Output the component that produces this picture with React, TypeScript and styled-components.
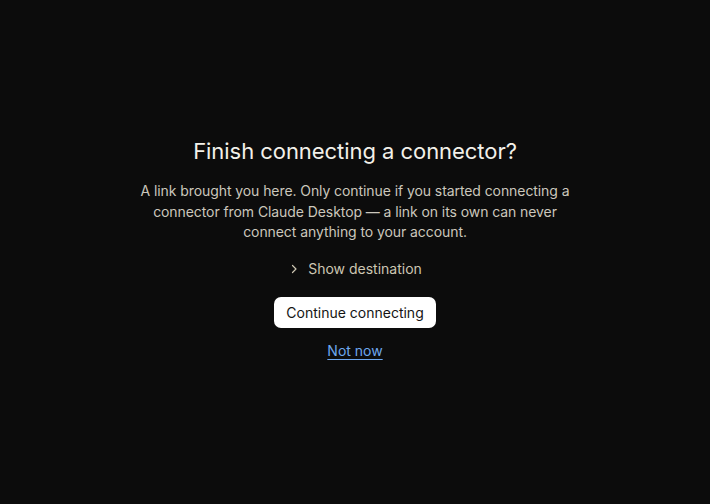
import React from "react";
import styled, { createGlobalStyle } from "styled-components";

const Global = createGlobalStyle`
  html, body { margin: 0; padding: 0; background: #0c0c0c; }
  #root { min-height: 100vh; }
`;

const Page = styled.main`
  min-height: 100vh;
  box-sizing: border-box;
  padding-bottom: 6px;
  display: flex;
  align-items: center;
  justify-content: center;
  font-family: Inter, "Noto Sans", sans-serif;
  background: #0c0c0c;
`;

const Panel = styled.section`
  display: flex;
  flex-direction: column;
  align-items: center;
  text-align: center;
  width: 440px;
`;

const Title = styled.h1`
  margin: 0 0 16px;
  font-size: 22px;
  font-weight: 400;
  line-height: 28px;
  color: #f3f1ea;
  letter-spacing: -0.05px;
`;

const Body = styled.p`
  margin: 0 0 16px;
  font-size: 14px;
  line-height: 20.5px;
  letter-spacing: -0.08px;
  color: #cbc7bc;
`;

const Disclosure = styled.button`
  display: flex;
  align-items: center;
  gap: 8px;
  background: none;
  border: 0;
  padding: 0;
  margin: 0 0 18px;
  font: inherit;
  font-size: 14px;
  line-height: 20px;
  color: #cdc6b2;
  cursor: pointer;
`;

const Primary = styled.button`
  height: 31px;
  padding: 0 12px;
  border: 0;
  border-radius: 7px;
  background: #ffffff;
  color: #141413;
  font: inherit;
  font-size: 14px;
  cursor: pointer;
  margin-bottom: 13px;
`;

const Secondary = styled.a`
  font-size: 14px;
  line-height: 20px;
  color: #6ea7ee;
  text-decoration: underline;
  text-underline-offset: 3px;
  cursor: pointer;
`;

const Chevron = () => (
  <svg width="12" height="12" viewBox="0 0 12 12" fill="none">
    <path d="M4.5 2.5 8 6 4.5 9.5" stroke="#cdc6b2" strokeWidth="1.2" strokeLinecap="round" strokeLinejoin="round" />
  </svg>
);

export default function App() {
  return (
    <>
      <Global />
      <Page>
        <Panel>
          <Title>Finish connecting a connector?</Title>
          <Body>
            A link brought you here. Only continue if you started connecting a
            connector from Claude Desktop — a link on its own can never connect
            anything to your account.
          </Body>
          <Disclosure type="button">
            <Chevron />
            Show destination
          </Disclosure>
          <Primary type="button">Continue connecting</Primary>
          <Secondary>Not now</Secondary>
        </Panel>
      </Page>
    </>
  );
}
